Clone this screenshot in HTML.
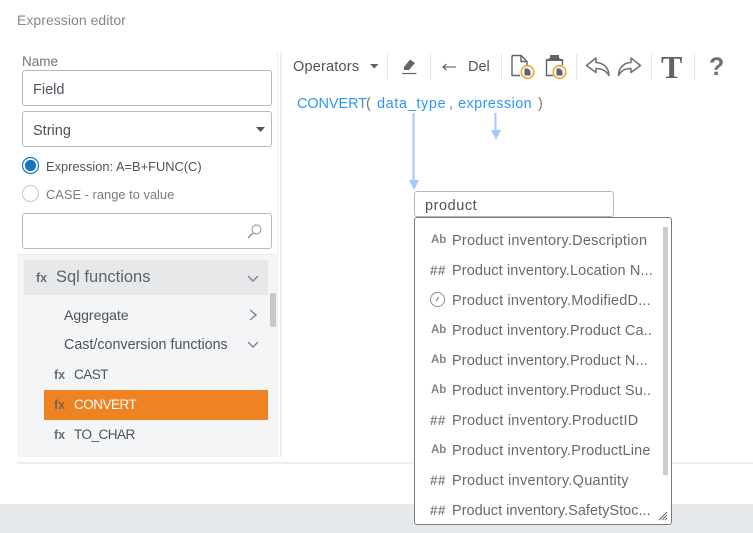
<!DOCTYPE html>
<html><head><meta charset="utf-8"><style>
html,body{margin:0;padding:0;width:753px;height:533px;overflow:hidden;background:#fff}
body{position:relative;font-family:"Liberation Sans",sans-serif;font-size:14px;color:#4b535b}
.a{position:absolute;white-space:nowrap}
.box{position:absolute;box-sizing:border-box;background:#fff;border:1px solid #b5b9bd;border-radius:3px}
.fx{position:absolute;font-weight:bold;font-size:12.5px;color:#6a6f74;white-space:nowrap}
.it{position:absolute;left:452px;font-size:14.5px;color:#636b73;white-space:nowrap;letter-spacing:.12px}
.ic{position:absolute;font-weight:bold;color:#80858a;white-space:nowrap}
.h{font-size:13.5px;left:430px;letter-spacing:.4px}
.b{font-size:11.5px;left:431px}
.sep{position:absolute;top:54px;width:1px;height:26px;background:#e4e6e8}
.bl{color:#2e96ff;font-size:14.5px}
svg{position:absolute;overflow:visible}
</style></head><body>
<div class="a" style="left:17px;top:12px;color:#808890;font-size:14px;letter-spacing:.04px">Expression editor</div>

<div class="a" style="left:17px;top:52px;width:260px;height:405px;background:#f4f5f7"></div>
<div class="a" style="left:17px;top:52px;width:260px;height:202px;background:#fff"></div>
<div class="a" style="left:17px;top:254px;width:255px;height:1px;background:#e8eaec"></div>
<div class="a" style="left:277px;top:52px;width:1px;height:405px;background:#eceef0"></div>
<div class="a" style="left:280px;top:52px;width:2px;height:405px;background:#eceef0"></div>
<div class="a" style="left:17px;top:462px;width:736px;height:2px;background:#eceef0"></div>
<div class="a" style="left:0;top:504px;width:753px;height:29px;background:#e6e9eb"></div>

<div class="a" style="left:22px;top:54px;color:#6f7780;font-size:13.5px">Name</div>
<div class="box" style="left:22px;top:70px;width:250px;height:36px"></div>
<div class="a" style="left:33px;top:82px;font-size:14.5px">Field</div>
<div class="box" style="left:22px;top:111px;width:250px;height:36px"></div>
<div class="a" style="left:33px;top:123px;font-size:14.5px">String</div>
<svg style="left:256px;top:127px" width="10" height="6"><path d="M0 0H9L4.5 5Z" fill="#4f5861"/></svg>

<svg style="left:22px;top:157px" width="18" height="18"><circle cx="8.500" cy="8.500" r="8" fill="#fff" stroke="#1b75bc" stroke-width="1.200"/><circle cx="8.500" cy="8.500" r="5.600" fill="#1b75bc"/></svg>
<div class="a" style="left:46px;top:159px;font-size:12.850px">Expression: A=B+FUNC(C)</div>
<svg style="left:22px;top:185px" width="18" height="18"><circle cx="8.500" cy="8.500" r="8" fill="#fff" stroke="#c4c7ca" stroke-width="1"/></svg>
<div class="a" style="left:46px;top:187px;font-size:12.900px;color:#757d85">CASE - range to value</div>

<div class="box" style="left:22px;top:213px;width:250px;height:36px"></div>
<svg style="left:247px;top:224px" width="16" height="16" fill="none" stroke="#8a9097"><circle cx="9.500" cy="5.500" r="4.500"/><path d="M6 9L1 14" stroke-width="1.500"/></svg>

<div class="a" style="left:24px;top:260px;width:244px;height:35px;background:#e6e8ea"></div>
<div class="fx" style="left:36px;top:271px">fx</div>
<div class="a" style="left:56px;top:268px;font-size:16.500px;color:#5c646c">Sql functions</div>
<svg style="left:247px;top:275px" width="13" height="8" fill="none" stroke="#7d848b" stroke-width="1.400"><path d="M1 1L6 6L11 1"/></svg>
<div class="a" style="left:270px;top:293px;width:6px;height:34px;background:#c6c8ca;border-radius:2px"></div>

<div class="a" style="left:64px;top:307px;font-size:14px">Aggregate</div>
<svg style="left:249px;top:309px" width="8" height="13" fill="none" stroke="#7d848b" stroke-width="1.400"><path d="M1 1L7 6L1 11"/></svg>
<div class="a" style="left:64px;top:337px;font-size:14.300px">Cast/conversion functions</div>
<svg style="left:247px;top:341px" width="13" height="8" fill="none" stroke="#7d848b" stroke-width="1.400"><path d="M1 1L6 6L11 1"/></svg>

<div class="fx" style="left:54px;top:368px">fx</div>
<div class="a" style="left:74px;top:367px;font-size:13.500px;letter-spacing:-.5px">CAST</div>
<div class="a" style="left:44px;top:390px;width:224px;height:30px;background:#ef8223"></div>
<div class="fx" style="left:54px;top:398px;color:#7a634f">fx</div>
<div class="a" style="left:74px;top:397px;font-size:13.500px;color:#fff;letter-spacing:-.5px">CONVERT</div>
<div class="fx" style="left:54px;top:428px">fx</div>
<div class="a" style="left:74px;top:427px;font-size:13.500px;letter-spacing:-.5px">TO_CHAR</div>

<!-- toolbar -->
<div class="a" style="left:293px;top:59px;font-size:14.500px;letter-spacing:.2px">Operators</div>
<svg style="left:370px;top:64px" width="9" height="5"><path d="M0 0H8.500L4.200 4.500Z" fill="#5b636b"/></svg>
<div class="sep" style="left:387px"></div>
<svg style="left:401px;top:58px" width="16" height="18"><path d="M3 9L9 1.500L14 5L8 12L3 12Z" fill="#5f666d"/><path d="M1 15.500H15.500" stroke="#5f666d" stroke-width="1.200"/></svg>
<div class="sep" style="left:430px"></div>
<svg style="left:442px;top:62px" width="15" height="10" fill="none" stroke="#4b535b" stroke-width="1.100"><path d="M1 5H14M4.500 2L1 5L4.500 8"/></svg>
<div class="a" style="left:468px;top:59px;font-size:14.500px">Del</div>
<div class="sep" style="left:501px"></div>
<svg style="left:510px;top:54px" width="28" height="26" fill="none"><path d="M2 1.500H11L17 7.500V12M11 1.500V7.500H17M2 1.500V21.500H10" stroke="#5d6369" stroke-width="1.400"/><circle cx="17.500" cy="18" r="6.300" fill="#fff" stroke="#f0921e" stroke-width="1.300"/><path d="M14.500 14.500H18L20.500 17V21.500H14.500Z" fill="#5d6369"/></svg>
<svg style="left:545px;top:54px" width="28" height="26" fill="none"><path d="M3 6H1.500V21.500H8M15 6H17.500V11" stroke="#5d6369" stroke-width="1.400"/><path d="M1.500 7V5.500L5 4V1H14V4L17.500 5.500V7H1.500Z" fill="#5d6369"/><circle cx="14.500" cy="18" r="6.300" fill="#fff" stroke="#f0921e" stroke-width="1.300"/><path d="M11.500 14.500H15L17.500 17V21.500H11.500Z" fill="#5d6369"/></svg>
<div class="sep" style="left:576px"></div>
<svg style="left:585px;top:57px" width="26" height="20" fill="none" stroke="#6b7076" stroke-width="1.500"><path d="M11 1L1.500 8.500L11 15.500V11.500C16 11.500 21 13.500 24 18.500C24 11 18 5.500 11 5.500Z" stroke-linejoin="round"/></svg>
<svg style="left:617px;top:57px" width="26" height="20" fill="none" stroke="#6b7076" stroke-width="1.500"><path d="M14 1L23.500 8.500L14 15.500V11.500C9 11.500 4 13.500 1.500 18.500C1.500 11 7 5.500 14 5.500Z" stroke-linejoin="round"/></svg>
<div class="sep" style="left:651px"></div>
<div class="a" style="left:661px;top:49px;font-family:'Liberation Serif',serif;font-weight:bold;font-size:32px;color:#5f6469">T</div>
<div class="sep" style="left:694px"></div>
<div class="a" style="left:709px;top:53px;font-weight:bold;font-size:25px;color:#6b7076">?</div>

<div class="a bl" style="left:297px;top:96px;letter-spacing:-.1px">CONVERT</div>
<div class="a" style="left:366px;top:96px;font-size:14.500px;color:#777">(</div>
<div class="a bl" style="left:377px;top:96px;letter-spacing:.62px">data_type</div>
<div class="a" style="left:449px;top:96px;font-size:14.500px;color:#777">,</div>
<div class="a bl" style="left:458px;top:96px;letter-spacing:.4px">expression</div>
<div class="a" style="left:538px;top:96px;font-size:14.500px;color:#777">)</div>

<svg style="left:0;top:0;width:753px;height:533px" width="753" height="533"><path d="M413.500 113V180" stroke="#a3c8ff" stroke-width="2"/><path d="M409 180H419L414 190Z" fill="#a3c8ff"/><path d="M495.500 113V130" stroke="#a3c8ff" stroke-width="2"/><path d="M491 130H501L496 140Z" fill="#a3c8ff"/></svg>

<div class="box" style="left:414px;top:191px;width:200px;height:26px"></div>
<div class="a" style="left:425px;top:198px;font-size:14.500px;letter-spacing:.55px">product</div>

<div class="box" style="left:414px;top:217px;width:258px;height:308px;border-color:#777c81;background:#fff"></div>
<div class="a" style="left:663px;top:227px;width:5px;height:248px;background:#c9cbcd"></div>

<div class="ic b" style="top:234px">Ab</div>
<div class="it" style="top:233px;letter-spacing:.24px">Product inventory.Description</div>
<div class="ic h" style="top:263px">##</div>
<div class="it" style="top:263px">Product inventory.Location N...</div>
<svg style="left:430px;top:292px" width="16" height="16" fill="none" stroke="#8a8f94"><circle cx="7.500" cy="7.500" r="7"/><path d="M8.500 5L6.500 9" stroke="#666"/></svg>
<div class="it" style="top:293px;letter-spacing:.19px">Product inventory.ModifiedD...</div>
<div class="ic b" style="top:324px">Ab</div>
<div class="it" style="top:323px">Product inventory.Product Ca..</div>
<div class="ic b" style="top:354px">Ab</div>
<div class="it" style="top:353px">Product inventory.Product N...</div>
<div class="ic b" style="top:384px">Ab</div>
<div class="it" style="top:383px">Product inventory.Product Su..</div>
<div class="ic h" style="top:413px">##</div>
<div class="it" style="top:413px;letter-spacing:.23px">Product inventory.ProductID</div>
<div class="ic b" style="top:444px">Ab</div>
<div class="it" style="top:443px;letter-spacing:.19px">Product inventory.ProductLine</div>
<div class="ic h" style="top:473px">##</div>
<div class="it" style="top:473px;letter-spacing:.27px">Product inventory.Quantity</div>
<div class="ic h" style="top:503px">##</div>
<div class="it" style="top:503px;letter-spacing:.02px">Product inventory.SafetyStoc...</div>
<svg style="left:659px;top:512px" width="9" height="9" stroke="#666" stroke-width="1"><path d="M0 8L8 0M3 8L8 3M6 8L8 6"/></svg>
</body></html>
